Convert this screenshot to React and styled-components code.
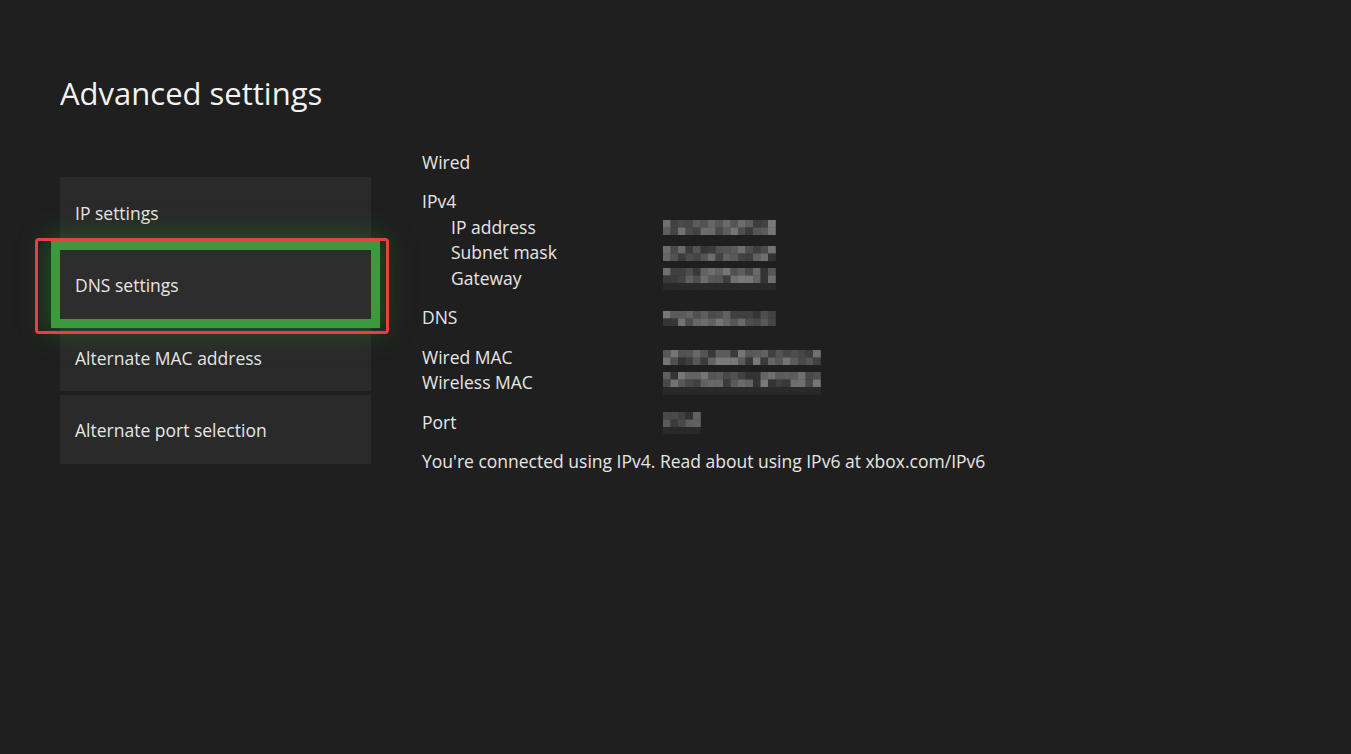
import React from 'react'
import styled, { createGlobalStyle } from 'styled-components'

const GlobalStyle = createGlobalStyle`
  html, body {
    margin: 0;
    background: #1f1f1f;
  }
  body {
    font-family: 'Open Sans', 'Noto Sans', sans-serif;
    color: #e8e8e8;
  }
`

const menuItems = [
  'IP settings',
  'DNS settings',
  'Alternate MAC address',
  'Alternate port selection'
]

// pseudo random grey for the blurred (pixelated) values
const shade = (seed, i) => {
  const x = Math.sin(seed * 97.13 + i * 12.9898) * 43758.5453
  const r = x - Math.floor(x)
  const v = Math.round(50 + r * 72)
  return `rgb(${v},${v},${v})`
}

const Pixelated = ({ cols, rows = 2, seed = 1, faint = false }) => {
  const cell = 7.5
  const cells = []
  for (let r = 0; r < rows; r++) {
    for (let c = 0; c < cols; c++) {
      const isFaint = faint && r === rows - 1
      cells.push(
        <rect
          key={`${r}-${c}`}
          x={c * cell}
          y={r * cell}
          width={cell + 0.3}
          height={cell + 0.3}
          fill={isFaint ? '#292929' : shade(seed, r * 40 + c)}
        />
      )
    }
  }
  return (
    <svg width={cols * cell} height={rows * cell} style={{ display: 'block' }}>
      {cells}
    </svg>
  )
}

const details = [
  [{ label: 'Wired' }],
  [
    { label: 'IPv4' },
    { label: 'IP address', indent: true, value: { cols: 15, seed: 3 } },
    { label: 'Subnet mask', indent: true, value: { cols: 15, seed: 7 } },
    { label: 'Gateway', indent: true, value: { cols: 15, seed: 11, rows: 3, faint: true } }
  ],
  [{ label: 'DNS', value: { cols: 15, seed: 5 } }],
  [
    { label: 'Wired MAC', value: { cols: 21, seed: 13 } },
    { label: 'Wireless MAC', value: { cols: 21, seed: 17, rows: 3, faint: true } }
  ],
  [{ label: 'Port', value: { cols: 5, seed: 19, rows: 3, faint: true } }]
]

const App = () => {
  return (
    <>
      <GlobalStyle />
      <Page>
        <Title>Advanced settings</Title>
        <Body>
          <Menu>
            {menuItems.map((item, i) => (
              <Tile key={item} selected={i === 1}>
                {item}
                {i === 1 && <Highlight />}
              </Tile>
            ))}
          </Menu>
          <Details>
            {details.map((group, gi) => (
              <Group key={gi}>
                {group.map(row => (
                  <Row key={row.label}>
                    <Label indent={row.indent}>{row.label}</Label>
                    {row.value && (
                      <Value>
                        <Pixelated {...row.value} />
                      </Value>
                    )}
                  </Row>
                ))}
              </Group>
            ))}
            <Note>You're connected using IPv4. Read about using IPv6 at xbox.com/IPv6</Note>
          </Details>
        </Body>
      </Page>
    </>
  )
}

export default App

const Page = styled.div`
  min-height: 754px;
  box-sizing: border-box;
  padding: 74px 0 0 60px;
`

const Title = styled.h1`
  margin: 0;
  font-size: 31px;
  line-height: 38px;
  font-weight: 400;
  color: #f2f2f2;
`

const Body = styled.div`
  display: flex;
  align-items: flex-start;
  gap: 51px;
  margin-top: 37px;
`

const Menu = styled.div`
  display: flex;
  flex-direction: column;
  gap: 3.5px;
  width: 311px;
  margin-top: 28px;
`

const Tile = styled.div`
  position: relative;
  z-index: ${props => (props.selected ? 2 : 1)};
  height: 69px;
  display: flex;
  align-items: center;
  padding-left: 15px;
  padding-top: 2px;
  box-sizing: border-box;
  background: ${props => (props.selected ? '#2d2d2d' : '#2a2a2a')};
  font-size: 17.5px;
  color: #e6e6e6;
  box-shadow: ${props =>
    props.selected
      ? '0 0 0 9px #3d993d, 0 0 24px 13px rgba(30, 130, 30, 0.5)'
      : 'none'};
`

const Highlight = styled.div`
  position: absolute;
  top: -12px;
  left: -25px;
  right: -18px;
  bottom: -15px;
  border: 3px solid #e8403f;
  border-radius: 4px;
  pointer-events: none;
`

const Details = styled.div`
  display: flex;
  flex-direction: column;
  font-size: 17.5px;
  color: #e6e6e6;
`

const Group = styled.div`
  margin-bottom: 14px;
`

const Row = styled.div`
  display: grid;
  grid-template-columns: 241px auto;
  align-items: center;
  height: 25.5px;
`

const Label = styled.div`
  padding-left: ${props => (props.indent ? '29px' : '0')};
  white-space: nowrap;
`

const Value = styled.div`
  display: flex;
  align-items: flex-start;
  padding-top: 2px;
`

const Note = styled.div`
  line-height: 25.5px;
`
